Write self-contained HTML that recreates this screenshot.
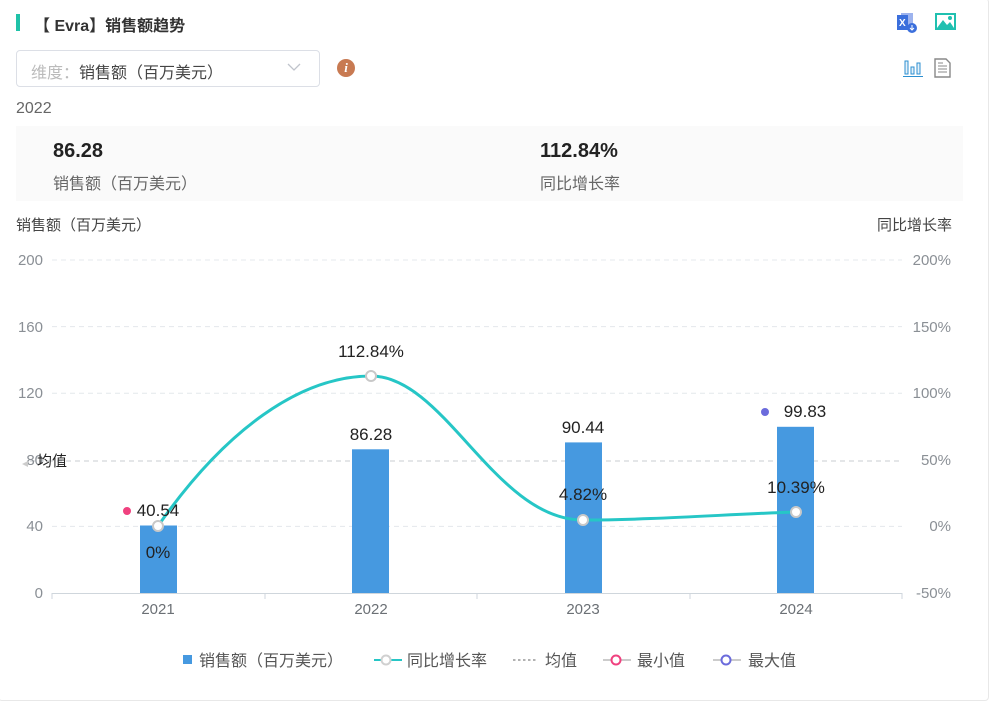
<!DOCTYPE html>
<html><head><meta charset="utf-8"><style>
*{margin:0;padding:0;box-sizing:border-box}
body{width:992px;height:704px;background:#fff;font-family:"Liberation Sans","Noto Sans CJK SC",sans-serif;position:relative;overflow:hidden;color:#333}
.card{position:absolute;left:-2px;top:-2px;width:991px;height:703px;border:1px solid #e8e8e8;border-radius:4px}
.abs{position:absolute;white-space:nowrap}
</style></head><body>
<div class="card"></div>
<div class="abs" style="left:16px;top:14px;width:4px;height:17px;background:#1fc2a8"></div>
<div class="abs" style="left:34px;top:12px;font-size:16px;font-weight:bold;color:#333">【 Evra】销售额趋势</div>
<div class="abs" style="left:16px;top:50px;width:304px;height:37px;border:1px solid #dcdfe6;border-radius:4px"></div>
<div class="abs" style="left:31px;top:59px;font-size:16px;color:#bbb">维度：<span style="color:#444">销售额（百万美元）</span></div>
<svg class="abs" style="left:287px;top:62px" width="14" height="10"><path d="M1 2 L7 8 L13 2" fill="none" stroke="#c0c4cc" stroke-width="1.3"/></svg>
<div class="abs" style="left:337px;top:59px;width:18px;height:18px;border-radius:50%;background:#c87a52;color:#fff;font-size:13px;font-weight:bold;font-style:italic;text-align:center;line-height:18px;font-family:'Liberation Serif',serif">i</div>
<svg class="abs" style="left:897px;top:12px" width="22" height="22"><rect x="4" y="1" width="12" height="15" fill="#9db3ee"/><rect x="0" y="3" width="11" height="15" fill="#3b6fdc"/><text x="2" y="14" font-size="10" fill="#fff" font-weight="bold">X</text><circle cx="15" cy="16" r="5" fill="#3b6fdc"/><path d="M15 13v5M13 16l2 2 2-2" stroke="#fff" fill="none"/></svg>
<svg class="abs" style="left:935px;top:13px" width="22" height="18"><rect x="1" y="1" width="19" height="15" fill="none" stroke="#20c0b0" stroke-width="2"/><path d="M2 15 L8 7 L12 12 L15 9 L19 15Z" fill="#20c0b0"/><circle cx="15" cy="5" r="2" fill="#20c0b0"/></svg>
<svg class="abs" style="left:903px;top:58px" width="20" height="20"><rect x="2" y="3" width="3" height="13" fill="#e6f2fa" stroke="#2c8fd0"/><rect x="8" y="9" width="3" height="7" fill="#e6f2fa" stroke="#2c8fd0"/><rect x="14" y="5" width="3" height="11" fill="#e6f2fa" stroke="#2c8fd0"/><path d="M0 18.5h20" stroke="#2c8fd0"/></svg>
<svg class="abs" style="left:934px;top:58px" width="18" height="20"><path d="M1 1h11l4 4v14H1z" fill="#fff" stroke="#888" stroke-width="1.4"/><path d="M4 8h9M4 11h9M4 14h9M4 5h5" stroke="#888"/></svg>
<div class="abs" style="left:16px;top:100px;font-size:16px;color:#666">2022</div>
<div class="abs" style="left:16px;top:126px;width:947px;height:75px;background:#fafafa"></div>
<div class="abs" style="left:53px;top:140px;font-size:20px;font-weight:bold;color:#222">86.28</div>
<div class="abs" style="left:53px;top:170px;font-size:16px;color:#666">销售额（百万美元）</div>
<div class="abs" style="left:540px;top:140px;font-size:20px;font-weight:bold;color:#222">112.84%</div>
<div class="abs" style="left:540px;top:170px;font-size:16px;color:#666">同比增长率</div>
<div class="abs" style="left:16px;top:214px;font-size:15px;color:#444">销售额（百万美元）</div>
<div class="abs" style="left:877px;top:214px;font-size:15px;color:#444">同比增长率</div>
<svg class="abs" style="left:0;top:0" width="992" height="704" font-family="Liberation Sans, Noto Sans CJK SC, sans-serif">
<g stroke="#e4e8ec" stroke-dasharray="5,4"><path d="M52 260H902M52 326.6H902M52 393.2H902M52 526.4H902"/></g>
<path d="M30 461H902" stroke="#c8ccd0" stroke-dasharray="5,4"/>
<g font-size="15" fill="#8a8f95" text-anchor="end"><text x="43" y="265">200</text><text x="43" y="332">160</text><text x="43" y="398">120</text><text x="43" y="465">80</text><text x="43" y="531">40</text><text x="43" y="598">0</text></g>
<g font-size="15" fill="#8a8f95" text-anchor="end"><text x="951" y="265">200%</text><text x="951" y="332">150%</text><text x="951" y="398">100%</text><text x="951" y="465">50%</text><text x="951" y="531">0%</text><text x="951" y="598">-50%</text></g>
<path d="M28 461l-6 3 6 3z" fill="#ccc"/>
<text x="37" y="466" font-size="15" fill="#222">均值</text>
<g fill="#4699e0"><rect x="140" y="525.5" width="37" height="67.5"/><rect x="352" y="449.3" width="37" height="143.7"/><rect x="565" y="442.4" width="37" height="150.6"/><rect x="777" y="426.8" width="37" height="166.2"/></g>
<path d="M52 593.5H902" stroke="#cfd6dc"/>
<g stroke="#cfd6dc"><path d="M52 593v6M265 593v6M477 593v6M690 593v6M902 593v6"/></g>
<g font-size="15" fill="#6b7075" text-anchor="middle"><text x="158" y="614">2021</text><text x="371" y="614">2022</text><text x="583" y="614">2023</text><text x="796" y="614">2024</text></g>
<path d="M158 526 C225 430 300 376 371 376 C445 376 495 520 583 520 C655 520 730 514 796 512" fill="none" stroke="#26c6c6" stroke-width="3"/>
<g fill="#fff" stroke="#c8c8c8" stroke-width="2"><circle cx="158" cy="526" r="5"/><circle cx="371" cy="376" r="5"/><circle cx="583" cy="520" r="5"/><circle cx="796" cy="512" r="5"/></g>
<g font-size="17" fill="#222" text-anchor="middle"><text x="158" y="516">40.54</text><text x="371" y="440">86.28</text><text x="583" y="433">90.44</text><text x="805" y="417">99.83</text>
<text x="158" y="558">0%</text><text x="371" y="357">112.84%</text><text x="583" y="500">4.82%</text><text x="796" y="493">10.39%</text></g>
<circle cx="127" cy="511" r="4" fill="#f0417f"/><circle cx="765" cy="412" r="4" fill="#6b6bdc"/>
<rect x="183" y="655" width="9" height="9" fill="#4699e0"/>
<text x="199" y="666" font-size="16" fill="#555">销售额（百万美元）</text>
<path d="M374 660H402" stroke="#26c6c6" stroke-width="2"/><circle cx="386" cy="660" r="4.5" fill="#fff" stroke="#d0d0d0" stroke-width="2"/>
<text x="407" y="666" font-size="16" fill="#555">同比增长率</text>
<path d="M513 660H538" stroke="#999" stroke-width="1.5" stroke-dasharray="2.5,2.5"/>
<text x="545" y="666" font-size="16" fill="#555">均值</text>
<path d="M603 660H631" stroke="#ccc" stroke-width="2"/><circle cx="616" cy="660" r="4.5" fill="#fff" stroke="#f0417f" stroke-width="2"/>
<text x="637" y="666" font-size="16" fill="#555">最小值</text>
<path d="M713 660H741" stroke="#ccc" stroke-width="2"/><circle cx="726" cy="660" r="4.5" fill="#fff" stroke="#6b6bdc" stroke-width="2"/>
<text x="748" y="666" font-size="16" fill="#555">最大值</text>
</svg>
</body></html>
